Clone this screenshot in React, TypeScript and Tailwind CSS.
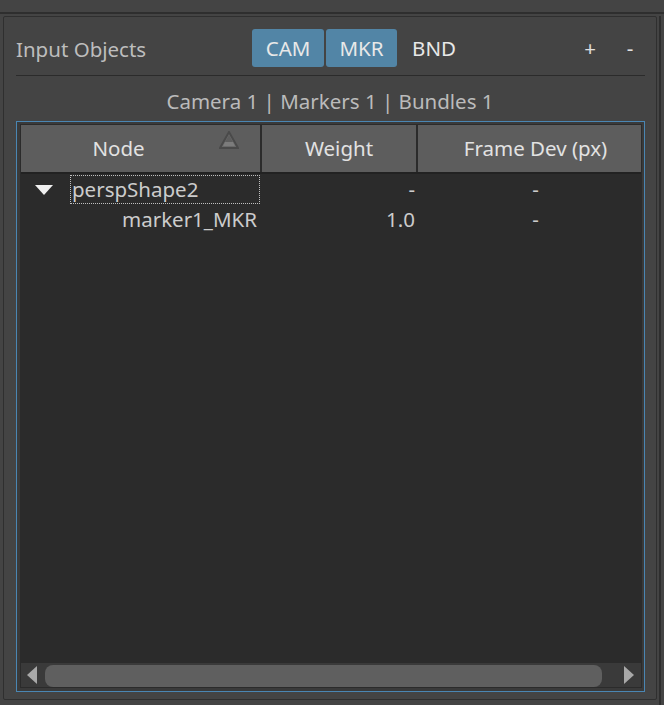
import React from "react";

function SortIndicator() {
  return (
    <svg width="20" height="18" viewBox="0 0 20 18" className="block">
      <polygon points="10,1 19,17 1,17" fill="#6a6a6a" stroke="#4a4a4a" strokeWidth="2" strokeLinejoin="miter" />
      <polygon points="10,4 16,15 4,15" fill="#5d5d5d" />
      <polygon points="6,11 14,11 16,15 4,15" fill="#7c7c7c" />
    </svg>
  );
}

export default function App() {
  return (
    <div
      className="w-[664px] h-[705px] bg-[#444444] overflow-hidden flex flex-col"
      style={{ fontFamily: '"Noto Sans", "Open Sans", sans-serif' }}
    >
      <div className="h-[12px] shrink-0" />
      <div className="h-[2px] shrink-0 bg-[#2e2e2e]" />
      <div className="flex flex-1 pt-[2px]">
        <div className="ml-[3px] w-[654px] h-[684px] border border-[#2f2f2f] rounded-[2px] flex flex-col">
          {/* title row */}
          <div className="mt-[12px] h-[38px] flex items-center pl-[12px]">
            <div className="w-[236px] text-[20.5px] text-[#bdbdbd] leading-none pt-[3px]">Input Objects</div>
            <div className="flex items-center gap-[2px]">
              <div className="w-[72px] h-[38px] rounded-[3px] bg-[#5285a6] text-[#e8e8e8] text-[20.5px] flex items-center justify-center">CAM</div>
              <div className="w-[71px] h-[38px] rounded-[3px] bg-[#5285a6] text-[#e8e8e8] text-[20.5px] flex items-center justify-center">MKR</div>
              <div className="w-[70px] h-[38px] text-[#e8e8e8] text-[20.5px] flex items-center justify-center">BND</div>
            </div>
            <div className="ml-auto flex items-center text-[20.5px] text-[#e0e0e0]">
              <div className="w-[40px] text-center">+</div>
              <div className="w-[40px] text-center mr-[6px]">-</div>
            </div>
          </div>
          {/* separator */}
          <div className="mt-[8px] ml-[12px] w-[629px] h-px bg-[#2b2b2b]" />
          {/* summary */}
          <div className="h-[45px] flex items-center justify-center pt-[5px] text-[20.5px] text-[#bbbbbb]">
            Camera 1 | Markers 1 | Bundles 1
          </div>
          {/* blue box */}
          <div className="ml-[12px] w-[629px] h-[571px] border border-[#4a86b3] bg-[#3a3a3a] pt-[2px] pl-[3px] pr-[2px] pb-[3px]">
            <div className="w-full h-full border border-[#2b2b2b] bg-[#2b2b2b] flex flex-col">
              {/* header */}
              <div className="h-[47px] flex bg-[#5d5d5d] text-[20.5px] text-[#e2e2e2] shrink-0">
                <div className="w-[239px] relative flex items-center justify-center pr-[44px]">
                  Node
                  <div className="absolute left-[198px] top-[6px]">
                    <SortIndicator />
                  </div>
                </div>
                <div className="w-[2px] bg-[#2b2b2b]" />
                <div className="w-[154px] flex items-center justify-center">Weight</div>
                <div className="w-[2px] bg-[#2b2b2b]" />
                <div className="flex-1 flex items-center justify-center pl-[12px]">Frame Dev (px)</div>
              </div>
              <div className="h-[2px] bg-[#222222] shrink-0" />
              {/* body */}
              <div className="flex-1 bg-[#2b2b2b] text-[20.5px] text-[#cccccc] pt-[1px]">
                <div className="h-[29px] flex items-center">
                  <div className="w-[239px] flex items-center h-full">
                    <svg width="18" height="10" viewBox="0 0 18 10" className="ml-[14px] mr-[17px]">
                      <polygon points="0,0 18,0 9,10" fill="#f0f0f0" />
                    </svg>
                    <div className="h-full flex-1 border border-dotted border-[#bfbfbf] flex items-center pl-[1px] leading-none">
                      perspShape2
                    </div>
                  </div>
                  <div className="w-[2px]" />
                  <div className="w-[154px] text-right pr-[1px]">-</div>
                  <div className="w-[2px]" />
                  <div className="flex-1 text-center pl-[12px]">-</div>
                </div>
                <div className="h-[30px] flex items-center">
                  <div className="w-[239px] pl-[101px]">marker1_MKR</div>
                  <div className="w-[2px]" />
                  <div className="w-[154px] text-right pr-[1px]">1.0</div>
                  <div className="w-[2px]" />
                  <div className="flex-1 text-center pl-[12px]">-</div>
                </div>
              </div>
              {/* scrollbar */}
              <div className="h-[24px] bg-[#3a3a3a] flex items-center shrink-0">
                <svg width="10" height="18" viewBox="0 0 10 18" className="ml-[6px]">
                  <polygon points="10,0 10,18 0,9" fill="#a8a8a8" />
                </svg>
                <div className="ml-[8px] w-[557px] h-[22px] mt-[2px] rounded-[8px] bg-[#5f5f5f]" />
                <svg width="10" height="18" viewBox="0 0 10 18" className="ml-[22px]">
                  <polygon points="0,0 0,18 10,9" fill="#a8a8a8" />
                </svg>
              </div>
            </div>
          </div>
        </div>
        <div className="ml-[2px] w-[2px] bg-[#2e2e2e]" />
      </div>
    </div>
  );
}
